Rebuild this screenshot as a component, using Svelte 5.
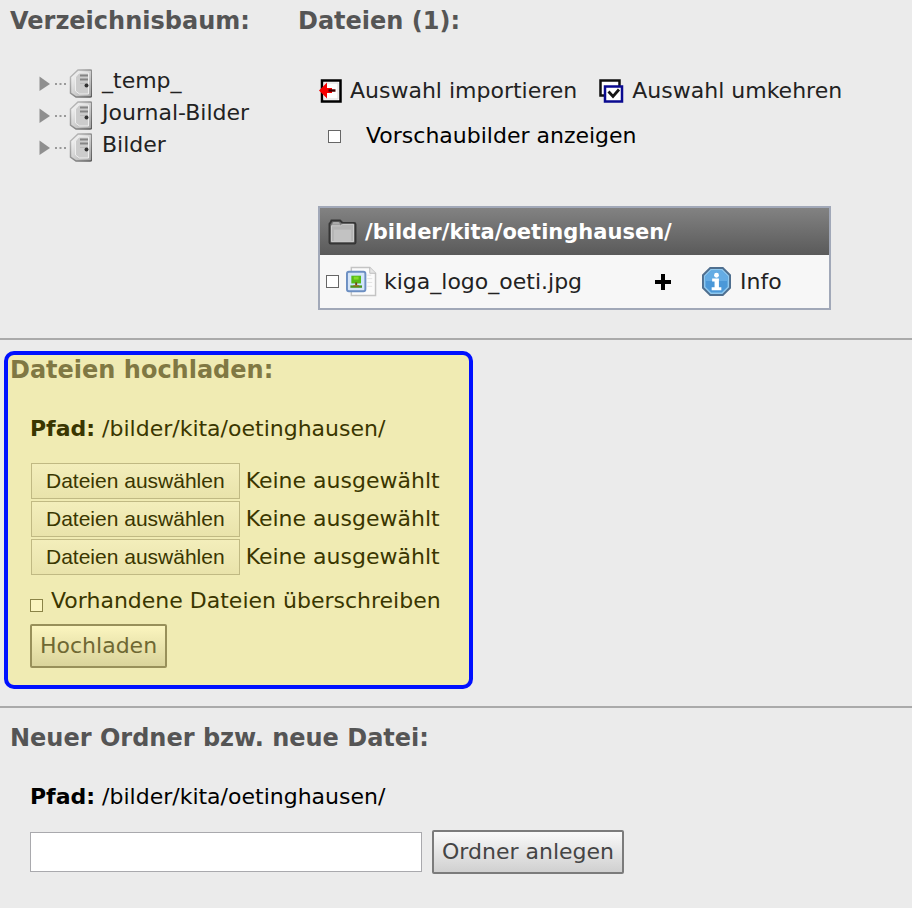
<script>
  const path = "/bilder/kita/oetinghausen/";

  let folders = ["_temp_", "Journal-Bilder", "Bilder"];
  let files = [{ name: "kiga_logo_oeti.jpg", selected: false }];

  // Upload form, one entry per file field
  let uploads = [null, null, null];
  let fileInputs = [];
  let overwrite = false;

  let showPreviews = false;
  let newFolderName = "";

  // Invert the current selection
  function invertSelection() {
    files = files.map(file => ({ ...file, selected: !file.selected }));
  }

  // Take the selected files out of the list
  function importSelection() {
    files = files.filter(file => !file.selected);
  }

  function chooseFiles(index, event) {
    const chosen = Array.from(event.target.files);
    uploads[index] = chosen.map(file => file.name).join(", ");
  }

  // Upload the chosen files into the current path
  function upload() {
    const names = uploads.filter(name => name);
    const known = files.map(file => file.name);
    const added = names.filter(name => overwrite || !known.includes(name));
    files = [
      ...files.filter(file => !added.includes(file.name)),
      ...added.map(name => ({ name, selected: false }))
    ];
    uploads = [null, null, null];
  }

  // Create a new folder
  function createFolder() {
    if (newFolderName) {
      folders = [...folders, newFolderName];
      newFolderName = "";
    }
  }
</script>

<main>
  <div class="browser">
    <section class="tree">
      <h2>Verzeichnisbaum:</h2>
      <ul>
        {#each folders as folder}
          <li>
            <a href="#tree">
              <svg width="54" height="32" viewBox="0 0 54 32" aria-hidden="true">
                <defs>
                  <linearGradient id="drive" x1="0" x2="1" y1="0" y2="1">
                    <stop offset="0" stop-color="#fff" />
                    <stop offset="1" stop-color="#a4a4a4" />
                  </linearGradient>
                  <linearGradient id="edge" x1="0" x2="1" y1="0" y2="1">
                    <stop offset="0" stop-color="#c4c4c4" />
                    <stop offset="1" stop-color="#5c5c5c" />
                  </linearGradient>
                </defs>
                <path d="M1.500 9.500v14.500L12 17z" fill="#8f8f8f" />
                <path d="M17 17h2M21.500 17h2M26 17h2" stroke="#999" stroke-width="2" />
                <path d="M40 3h12.500q1.200 0 1.200 1.200v24.300q0 1.500-1.500 1.500H38l-5.500-4V10z" fill="url(#drive)" stroke="url(#edge)" stroke-width="1.500" />
                <path d="M41 6h9.500v21h-9l-4-3V10z" fill="#ccc" stroke="#eee" />
                <path d="M42 8.500h8M42 12.500h8" stroke="#858585" stroke-width="2" />
                <path d="M42 16.500h8" stroke="#bbb" stroke-width="1" />
                <circle cx="48.500" cy="18.500" r="2" fill="#333" />
              </svg>
              <span>{folder}</span>
            </a>
          </li>
        {/each}
      </ul>
    </section>

    <section class="files">
      <h2>Dateien ({files.length}):</h2>
      <div class="toolbar">
        <button class="link" on:click={importSelection}>
          <svg width="24" height="24" viewBox="0 0 24 24" aria-hidden="true">
            <path d="M3 1.500h18.500v21H3z" fill="#fff" stroke="#000" stroke-width="2.500" />
            <path d="M5 4h14v16H5z" fill="none" stroke="#ddd" />
            <path d="M0 11.500 8 3.500v5.500h5v5H8v5.500z" fill="#f60000" />
            <path d="M9.500 11.500h7" stroke="#400" stroke-width="2.500" />
          </svg>
          Auswahl importieren
        </button>
        <button class="link" on:click={invertSelection}>
          <svg width="26" height="24" viewBox="0 0 26 24" aria-hidden="true">
            <path d="M1.500 1.500h19v15h-19z" fill="#fff" stroke="#111" stroke-width="2.500" />
            <path d="M6 7.500h17v15H6z" fill="#fff" stroke="#0a0a90" stroke-width="2.500" />
            <path d="M9.500 12.500l4.500 5 6-7" fill="none" stroke="#151515" stroke-width="2.800" />
          </svg>
          Auswahl umkehren
        </button>
      </div>

      <label class="previews">
        <input type="checkbox" bind:checked={showPreviews} />
        Vorschaubilder anzeigen
      </label>

      <table>
        <thead>
          <tr>
            <th colspan="3">
              <div class="cell">
                <svg width="29" height="26" viewBox="0 0 30 27" aria-hidden="true">
                  <path d="M1.500 5Q1.500 4 2.500 4l1-2.500h9L15 4h12q1.500 0 1.500 1.500v19q0 1-1 1h-25q-1 0-1-1z" fill="#777" stroke="#353535" stroke-width="2" />
                  <path d="M4 6l1.500-3H11l2 3z" fill="#aaa" />
                  <path d="M3.500 7H13l2-1.500h11.500v18h-23z" fill="#b4b4b4" stroke="#d0d0d0" />
                  <path d="M6 11h18v12H6z" fill="#c2c2c2" />
                </svg>
                {path}
              </div>
            </th>
          </tr>
        </thead>
        <tbody>
          {#each files as file}
            <tr>
              <td class="name">
                <label class="cell">
                  <input type="checkbox" bind:checked={file.selected} />
                  <svg width="31" height="31" viewBox="0 0 32 32" aria-hidden="true">
                    <path d="M5.500 1.500h19l6 6v23h-25z" fill="#fbfbfb" stroke="#c4c4c4" stroke-width="1.500" />
                    <path d="M24.500 1.500v6h6" fill="#e6e6e6" stroke="#bbb" />
                    <path d="M22 9.500h4M22 13h5M22 17h5M22 21h5" stroke="#e3e3e3" />
                    <rect x="1" y="6" width="19" height="20" rx="2" fill="#d5e5f8" stroke="#6c8fc2" stroke-width="2" />
                    <path d="M4.500 9.500h12v13h-12z" fill="#c9e8ff" />
                    <path d="M5.500 10h10v8h-10z" fill="#58ba17" />
                    <path d="M8 11h5v3H8z" fill="#82dc27" />
                    <path d="M9.500 17h2v3h-2z" fill="#744518" />
                    <path d="M4.500 20h12v2.500h-12z" fill="#4c941e" />
                    <path d="M7.500 20.500h6" stroke="#b35b18" />
                  </svg>
                  <span>{file.name}</span>
                </label>
              </td>
              <td class="add">
                <button class="link" aria-label="Hinzufügen">
                  <svg width="18" height="18" viewBox="0 0 18 18" aria-hidden="true">
                    <path d="M9 1v16M1 9h16" stroke="#000" stroke-width="4" />
                  </svg>
                </button>
              </td>
              <td class="info">
                <button class="link">
                  <svg width="29" height="29" viewBox="0 0 30 30" aria-hidden="true">
                    <path d="M8.500 1h13L29 8.500v13L21.500 29h-13L1 21.500v-13z" fill="#8fc8ee" stroke="#4f6f8f" stroke-width="2" />
                    <path d="M9.500 3.500h11l6 6v11l-6 6h-11l-6-6v-11z" fill="#4b98d8" />
                    <path d="M9.500 3.500h11l6 6v5h-23v-5z" fill="#65ace4" />
                    <circle cx="15" cy="8.500" r="2.500" fill="#fff" />
                    <path d="M10.500 12h7v9h2.500v3H10v-3h3v-6h-2.500z" fill="#fff" />
                  </svg>
                  Info
                </button>
              </td>
            </tr>
          {/each}
        </tbody>
      </table>
    </section>
  </div>

  <section class="upload">
    <div class="highlight">
      <h2>Dateien hochladen:</h2>
      <div class="body">
        <p><b>Pfad:</b> {path}</p>
        {#each uploads as chosen, i}
          <div class="file">
            <input
              type="file"
              multiple
              hidden
              bind:this={fileInputs[i]}
              on:change={event => chooseFiles(i, event)}
            />
            <button on:click={() => fileInputs[i].click()}>Dateien auswählen</button>
            <span>{chosen || "Keine ausgewählt"}</span>
          </div>
        {/each}
        <label class="overwrite">
          <input type="checkbox" bind:checked={overwrite} />
          Vorhandene Dateien überschreiben
        </label>
        <button class="submit" on:click={upload}>Hochladen</button>
      </div>
    </div>
  </section>

  <section class="create">
    <h2>Neuer Ordner bzw. neue Datei:</h2>
    <div class="body">
      <p><b>Pfad:</b> {path}</p>
      <div class="row">
        <input type="text" aria-label="Ordnername" bind:value={newFolderName} />
        <button class="submit" on:click={createFolder}>Ordner anlegen</button>
      </div>
    </div>
  </section>
</main>

<style>
  :global(body) {
    background-color: #ebebeb;
  }

  main {
    padding-top: 7px;
    font-family: Verdana, "DejaVu Sans", sans-serif;
    font-size: 22px;
    line-height: 28px;
    color: #000;
  }

  h2 {
    margin: 0;
    font-size: 24px;
    line-height: 28px;
    color: #555;
    white-space: nowrap;
  }

  p {
    margin: 0;
  }

  button,
  input[type="text"] {
    font: inherit;
  }

  button {
    white-space: nowrap;
    cursor: pointer;
  }

  svg {
    display: block;
    flex: none;
  }

  input[type="checkbox"] {
    appearance: none;
    flex: none;
    width: 13px;
    height: 13px;
    margin: 0;
    border: 1px solid #666;
    background-color: #fff;
  }

  input[type="checkbox"]:checked {
    background-color: #666;
  }

  .browser {
    display: grid;
    grid-template-columns: 288px 1fr;
    padding: 0 10px 28px;
  }

  .tree ul {
    list-style-type: none;
    margin: 32px 0 0;
    padding: 0 0 0 28px;
  }

  .tree a {
    display: flex;
    gap: 10px;
    color: #222;
    text-decoration: none;
  }

  .link {
    display: flex;
    align-items: center;
    gap: 7px;
    padding: 0;
    border: none;
    background: none;
    color: #222;
  }

  .toolbar {
    display: flex;
    gap: 22px;
    margin: 42px 0 0 21px;
  }

  .previews {
    display: flex;
    align-items: center;
    gap: 25px;
    margin: 17px 0 0 30px;
  }

  table {
    width: 513px;
    max-width: 100%;
    margin: 56px 0 0 20px;
    border: 2px solid #a1a8b8;
    border-spacing: 0;
    background-color: #f7f7f7;
  }

  th,
  td {
    padding: 0;
  }

  th {
    height: 47px;
    background: linear-gradient(#828282, #5a5a5a);
    color: #fff;
    font-size: 21px;
    text-align: left;
  }

  td {
    height: 53px;
  }

  .cell {
    display: flex;
    align-items: center;
    gap: 8px;
    padding-left: 8px;
  }

  td .cell {
    gap: 7px;
    padding-left: 6px;
    color: #222;
  }

  .add {
    width: 48px;
  }

  .info {
    width: 127px;
  }

  .info .link {
    gap: 9px;
  }

  .body {
    padding: 31px 20px 0;
  }

  .upload {
    padding: 11px 4px 17px;
    border-top: 2px solid #aaa;
    border-bottom: 2px solid #aaa;
  }

  .highlight {
    box-sizing: border-box;
    width: 469px;
    max-width: 100%;
    padding: 1px 2px 17px;
    border: 4px solid #0010ff;
    border-radius: 10px;
    background-color: #f0ebb3;
    color: #3a3600;
  }

  .highlight h2 {
    color: #807843;
  }

  .highlight p {
    margin-bottom: 20px;
  }

  .file {
    display: flex;
    align-items: center;
    gap: 6px;
    margin-bottom: 2px;
  }

  .file button {
    height: 36px;
    margin-left: 1px;
    padding: 0 14px;
    border: 1px solid #c0b983;
    background: linear-gradient(#f3eebb, #e9e3ab);
    color: #3a3600;
    font-family: Arial, "Liberation Sans", sans-serif;
    font-size: 21px;
  }

  .overwrite {
    display: flex;
    align-items: center;
    gap: 8px;
    margin: 12px 0 9px;
    white-space: nowrap;
  }

  .highlight input[type="checkbox"] {
    margin-top: 8px;
    border-color: #8a8347;
    background-color: #fbf5bf;
  }

  .submit {
    height: 44px;
    padding: 0 8px;
    border: 2px solid #7b7b7b;
    border-radius: 2px;
    background: linear-gradient(#f9f9f9, #d0d0d0);
    color: #444;
  }

  .highlight .submit {
    border-color: #98905a;
    background: linear-gradient(#fbf5bf, #dad49b);
    color: #6f6833;
  }

  .create {
    padding: 16px 10px 32px;
  }

  .row {
    display: flex;
    align-items: center;
    gap: 10px;
    margin-top: 19px;
  }

  .row input {
    box-sizing: border-box;
    width: 392px;
    height: 40px;
    padding: 0 8px;
    border: 1px solid #a9a9ad;
    background-color: #fff;
  }
</style>
